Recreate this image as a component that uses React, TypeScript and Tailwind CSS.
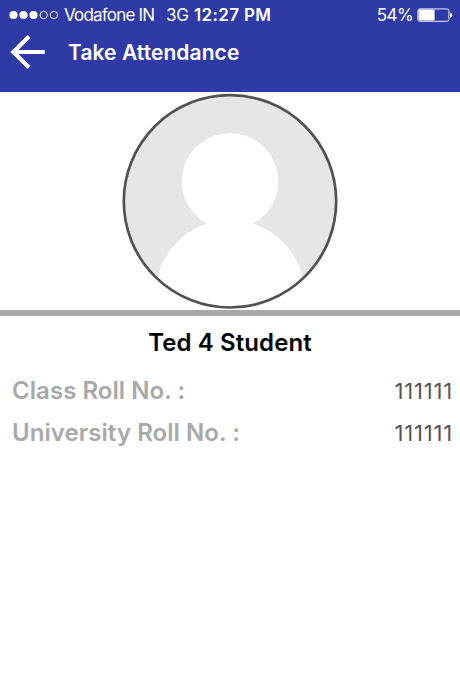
import type { ReactNode } from 'react'

const details = [
  { label: 'Class Roll No. :', value: '111111' },
  { label: 'University Roll No. :', value: '111111' },
]

function StatusBar() {
  return (
    <div className="flex h-[30px] items-center pl-[9px] pr-[7px] text-[17px] leading-[30px]">
      <svg width="50" height="10" viewBox="0 0 50 10" fill="white">
        <circle cx="4.5" cy="5" r="4.1" />
        <circle cx="14.5" cy="5" r="4.1" />
        <circle cx="24.5" cy="5" r="4.1" />
        <circle cx="34.7" cy="5" r="3.7" fill="none" stroke="white" strokeWidth="0.9" />
        <circle cx="44.9" cy="5" r="3.7" fill="none" stroke="white" strokeWidth="0.9" />
      </svg>
      <span className="ml-[5px] w-[102px] whitespace-nowrap tracking-[-0.8px]">Vodafone IN</span>
      <span className="w-[28px] tracking-[-0.3px]">3G</span>
      <span className="whitespace-nowrap font-semibold tracking-[0.35px]">12:27 PM</span>
      <span className="ml-auto mr-[4px] tracking-[-0.6px]">54%</span>
      <svg width="36" height="14" viewBox="0 0 36 14" fill="none">
        <rect x="0.9" y="0.9" width="31" height="12.4" rx="1.8" stroke="white" strokeWidth="0.9" />
        <rect x="1.6" y="1.6" width="16" height="11" rx="0.8" fill="white" />
        <path d="M33 4.4c3 .8 3 4.6 0 5.4z" fill="white" />
      </svg>
    </div>
  )
}

function Header({ children }: { children: ReactNode }) {
  return (
    <div className="flex h-[62px] items-start pl-[10px]">
      <button className="mt-[4px]" aria-label="Back">
        <svg width="36" height="36" viewBox="0 0 36 36" fill="none" stroke="white">
          <path d="M34.8 18H3.2M19 2.4L3.4 18 19 33.6" strokeWidth="4.2" />
        </svg>
      </button>
      <h1 className="ml-[22px] mt-[1px] whitespace-nowrap text-[21px] font-semibold leading-[44px] tracking-[0.08px]">
        {children}
      </h1>
    </div>
  )
}

function Avatar() {
  return (
    <svg width="216" height="216" viewBox="0 0 216 216">
      <defs>
        <clipPath id="avatar">
          <circle cx="108" cy="108.3" r="106.5" />
        </clipPath>
      </defs>
      <g clipPath="url(#avatar)">
        <rect width="216" height="216" fill="#e6e6e6" />
        <circle cx="108" cy="88.4" r="48.2" fill="white" />
        <circle cx="108" cy="201.7" r="74.7" fill="white" />
      </g>
      <circle cx="108" cy="108.3" r="106.2" fill="none" stroke="#515151" strokeWidth="2.7" />
    </svg>
  )
}

export default function App() {
  return (
    <div className="h-[690px] w-[460px] overflow-hidden bg-white font-['Inter',sans-serif]">
      {/* Status bar and title */}
      <header className="h-[92px] bg-[#2f3aa6] text-white">
        <StatusBar />
        <Header>Take Attendance</Header>
      </header>

      {/* Photo */}
      <div className="flex h-[224px] justify-center border-b-[6px] border-[#a9a9a9] pt-[1px]">
        <Avatar />
      </div>

      <h2 className="mt-[9px] text-center text-[24px] font-semibold leading-[36px] tracking-[0.1px] text-black">
        Ted 4 Student
      </h2>

      {/* Roll numbers */}
      <dl className="mt-[9px] pl-[12px] pr-[7px]">
        {details.map(({ label, value }) => (
          <div key={label} className="flex h-[42px] items-center justify-between">
            <dt className="whitespace-nowrap text-[24px] font-semibold tracking-[0.05px] text-[#a9a9a9]">
              {label}
            </dt>
            <dd className="text-[22px] tracking-[0.8px] text-[#555]">{value}</dd>
          </div>
        ))}
      </dl>
    </div>
  )
}
